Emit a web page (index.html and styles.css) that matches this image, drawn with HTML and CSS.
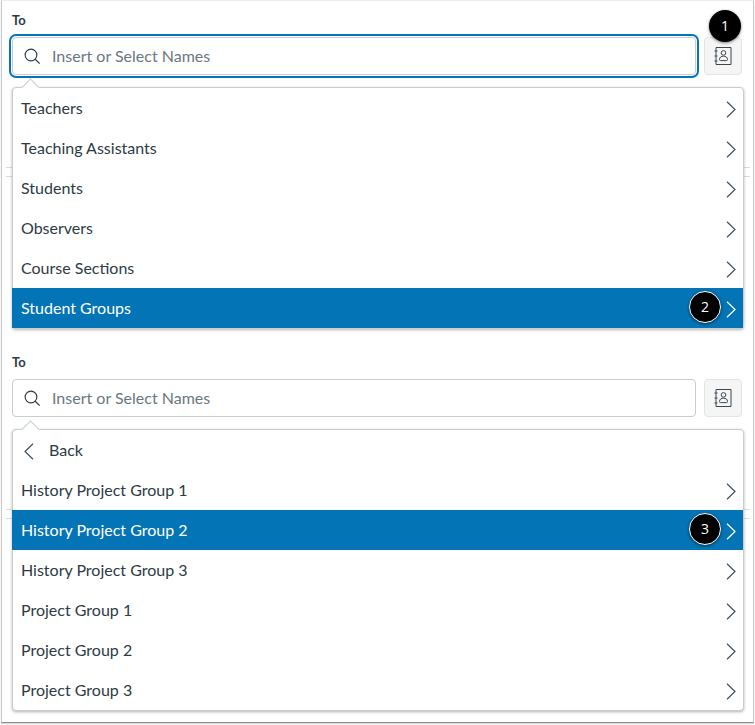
FILE: index.html
```html
<!DOCTYPE html>
<html lang="en">

<head>
    <meta charset="UTF-8">
    <meta name="viewport" content="width=device-width, initial-scale=1.0">
    <title>To</title>
    <link rel="stylesheet" href="styles.css">
</head>

<body>
    <div class="frame">
        <svg class="defs" width="0" height="0">
            <symbol id="search" viewBox="0 0 18 18">
                <circle cx="7.4" cy="7.4" r="6.2" fill="none" stroke="currentColor" stroke-width="1.2"></circle>
                <path d="M11.9 11.9L16.6 16.6" fill="none" stroke="currentColor" stroke-width="1.3"></path>
            </symbol>
            <symbol id="next" viewBox="0 0 10 17">
                <path d="M1 .7L9 8.5L1 16.3" fill="none" stroke="currentColor" stroke-width="1.2"></path>
            </symbol>
            <symbol id="back" viewBox="0 0 10 17">
                <path d="M9 .7L1 8.5L9 16.3" fill="none" stroke="currentColor" stroke-width="1.2"></path>
            </symbol>
            <symbol id="book" viewBox="0 0 18 18">
                <path d="M2 .5H17V17.5H2Z" fill="none" stroke="currentColor" stroke-width="1"></path>
                <path d="M.5 4H3.5M.5 9H3.5M.5 14H3.5" fill="none" stroke="currentColor" stroke-width="1.2"></path>
                <circle cx="9.5" cy="5.9" r="2.3" fill="none" stroke="currentColor" stroke-width="1"></circle>
                <path d="M5.5 12.6C5.5 10 7.5 9.2 9.5 9.2S13.5 10 13.5 12.6C13.5 13.2 13.2 13.6 12.6 13.6H6.4C5.8 13.6 5.5 13.2 5.5 12.6Z" fill="none" stroke="currentColor" stroke-width="1"></path>
            </symbol>
        </svg>

        <section class="picker picker-first">
            <div class="label">To</div>
            <div class="field-row">
                <div class="field field-focus">
                    <svg class="icon-search"><use href="#search"></use></svg>
                    <span>Insert or Select Names</span>
                </div>
                <div class="book-btn"><svg class="icon-book"><use href="#book"></use></svg></div>
                <div class="badge badge-top">1</div>
            </div>
            <ul class="menu">
                <li>Teachers<svg class="icon-arrow"><use href="#next"></use></svg></li>
                <li>Teaching Assistants<svg class="icon-arrow"><use href="#next"></use></svg></li>
                <li>Students<svg class="icon-arrow"><use href="#next"></use></svg></li>
                <li>Observers<svg class="icon-arrow"><use href="#next"></use></svg></li>
                <li>Course Sections<svg class="icon-arrow"><use href="#next"></use></svg></li>
                <li class="active">Student Groups<div class="badge">2</div><svg class="icon-arrow"><use href="#next"></use></svg></li>
            </ul>
        </section>

        <section class="picker picker-second">
            <div class="label">To</div>
            <div class="field-row">
                <div class="field">
                    <svg class="icon-search"><use href="#search"></use></svg>
                    <span>Insert or Select Names</span>
                </div>
                <div class="book-btn"><svg class="icon-book"><use href="#book"></use></svg></div>
            </div>
            <ul class="menu">
                <li class="back"><svg class="icon-back"><use href="#back"></use></svg>Back</li>
                <li>History Project Group 1<svg class="icon-arrow"><use href="#next"></use></svg></li>
                <li class="active">History Project Group 2<div class="badge">3</div><svg class="icon-arrow"><use href="#next"></use></svg></li>
                <li>History Project Group 3<svg class="icon-arrow"><use href="#next"></use></svg></li>
                <li>Project Group 1<svg class="icon-arrow"><use href="#next"></use></svg></li>
                <li>Project Group 2<svg class="icon-arrow"><use href="#next"></use></svg></li>
                <li>Project Group 3<svg class="icon-arrow"><use href="#next"></use></svg></li>
            </ul>
        </section>
    </div>
</body>

</html>
```

FILE: styles.css
```css
* {
    padding: 0;
    margin: 0;
    box-sizing: border-box;
}

html,
body {
    background-color: white;
}

body {
    width: 755px;
    height: 725px;
    overflow: hidden;
    font-family: Lato, "Open Sans", sans-serif;
    color: #2d3b45;
}

li {
    list-style: none;
}

.defs {
    position: absolute;
}

.frame {
    position: relative;
    width: 753px;
    height: 723px;
    margin-left: 1px;
    padding-left: 10px;
    border: 1px solid #c8c8c8;
    border-top-color: #ececec;
    border-bottom-color: #8f8f8f;
    box-shadow: 0 1px 1px rgba(0, 0, 0, .15);
}

.picker {
    position: relative;
    width: 732px;
}

/* lines of the page behind the menus */
.picker::before,
.picker::after {
    content: "";
    position: absolute;
    left: -6px;
    width: 744px;
    height: 1px;
    background-color: #dcdcdc;
}

.picker-first {
    padding-top: 11px;
}

.picker-first::before {
    top: 166px;
}

.picker-first::after {
    top: 175px;
}

.picker-second {
    margin-top: 25px;
}

.picker-second::before {
    top: 155px;
}

.picker-second::after {
    top: 164px;
}

.label {
    height: 16px;
    line-height: 16px;
    margin-bottom: 9px;
    font-size: 13px;
    font-weight: 700;
}

.field-row {
    position: relative;
    display: flex;
    align-items: center;
    height: 38px;
    gap: 8px;
}

.field {
    display: flex;
    align-items: center;
    width: 684px;
    height: 38px;
    padding-left: 11px;
    background-color: white;
    border: 1px solid #c7cdd1;
    border-radius: 4px;
    font-size: 16px;
    color: #6b7780;
}

.field span {
    margin-top: -2px;
}

.field-focus {
    box-shadow: 0 0 0 1px white, 0 0 0 3px #0374b5;
}

.icon-search {
    width: 17px;
    height: 17px;
    margin-right: 11px;
    color: #2d3b45;
}

.book-btn {
    display: flex;
    align-items: center;
    justify-content: center;
    width: 38px;
    height: 38px;
    background-color: #f5f5f5;
    border: 1px solid #e2e4e6;
    border-radius: 4px;
}

.icon-book {
    width: 18px;
    height: 18px;
    color: #3a4853;
}

.menu {
    position: relative;
    z-index: 1;
    margin-top: 12px;
    background-color: white;
    border: 1px solid #c7cdd1;
    border-radius: 4px;
    box-shadow: 0 1px 3px rgba(0, 0, 0, .3);
    font-size: 16px;
}

/* little notch pointing to the field */
.menu::before {
    content: "";
    position: absolute;
    left: 11px;
    top: -7px;
    width: 12px;
    height: 12px;
    background-color: white;
    border-left: 1px solid #c7cdd1;
    border-top: 1px solid #c7cdd1;
    transform: rotate(45deg);
}

.menu li {
    position: relative;
    display: flex;
    align-items: center;
    justify-content: space-between;
    height: 40px;
    padding: 0 7px 2px 8px;
}

.menu li.back {
    justify-content: flex-start;
}

.menu li.active {
    margin-left: -1px;
    padding-left: 9px;
    background-color: #0374b5;
    color: white;
}

.icon-arrow {
    width: 10px;
    height: 17px;
    margin-top: 5px;
    color: #3f4f5c;
}

.active .icon-arrow {
    color: white;
}

.icon-back {
    width: 10px;
    height: 17px;
    margin: 5px 15px 0 3px;
    color: #3f4f5c;
}

.badge {
    position: absolute;
    right: 22px;
    top: 3px;
    width: 32px;
    height: 32px;
    line-height: 30px;
    text-align: center;
    background-color: black;
    border: 1px solid white;
    border-radius: 50%;
    box-shadow: 0 1px 3px rgba(0, 0, 0, .5);
    font-family: "Open Sans", sans-serif;
    font-size: 14px;
    color: white;
}

.badge-top {
    right: 3px;
    top: -27px;
    border: 0;
    line-height: 32px;
}
```
